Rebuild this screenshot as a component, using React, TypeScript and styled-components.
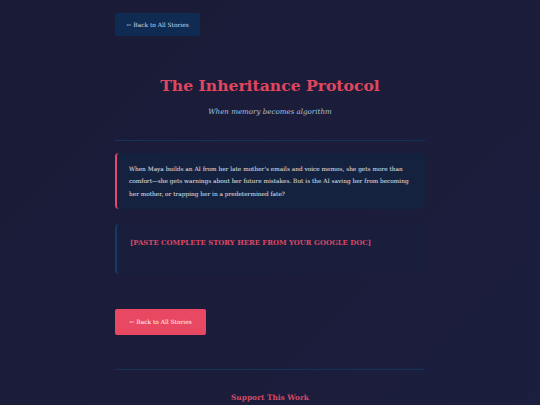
import React from "react";
import styled, { createGlobalStyle } from "styled-components";

const GlobalStyle = createGlobalStyle`
  html, body {
    margin: 0;
    padding: 0;
    background: #1a1c38;
  }
  body {
    font-family: "DejaVu Serif", Georgia, serif;
    color: #e8e8f0;
  }
`;

const Page = styled.div`
  width: 100%;
  min-height: 405px;
  display: flex;
  justify-content: center;
  background: linear-gradient(135deg, #1a1b36 0%, #1b1e3d 100%);
`;

const Wrapper = styled.div`
  width: 310px;
  padding-top: 13px;
  display: flex;
  flex-direction: column;
`;

const BackButton = styled.a<{ $primary?: boolean }>`
  align-self: flex-start;
  display: inline-flex;
  align-items: center;
  padding: ${({ $primary }) => ($primary ? "0 14.5px" : "0 11.5px")};
  height: ${({ $primary }) => ($primary ? "26px" : "23px")};
  border-radius: 2px;
  font-size: 5.9px;
  color: ${({ $primary }) => ($primary ? "#fff4f6" : "#c9d8ec")};
  background: ${({ $primary }) => ($primary ? "#e94862" : "#0f2b52")};
  text-decoration: none;
`;

const Header = styled.header`
  display: flex;
  flex-direction: column;
  align-items: center;
  padding: 40px 0 24px;
  border-bottom: 1px solid #14335a;
`;

const Title = styled.h1`
  margin: 0;
  font-size: 15.6px;
  font-weight: bold;
  color: #e1465e;
`;

const Subtitle = styled.p`
  margin: 12px 0 0;
  font-size: 7.1px;
  font-style: italic;
  color: #a9c2dc;
`;

const Summary = styled.div`
  margin-top: 12px;
  padding: 10px 12px 9px;
  background: #15223f;
  border-left: 2px solid #e2496a;
  border-radius: 4px;
  font-size: 5.8px;
  line-height: 12.3px;
  color: #e2e6ee;
`;

const StoryBox = styled.div`
  margin-top: 15px;
  height: 50px;
  box-sizing: border-box;
  padding: 15px 13px;
  border-left: 2px solid #173a66;
  border-radius: 4px;
  background: #1a1e3d;
`;

const Placeholder = styled.p`
  margin: 0;
  font-size: 6.9px;
  font-weight: bold;
  color: #d94763;
`;

const Footer = styled.div`
  margin-top: 35px;
`;

const Support = styled.section`
  margin-top: 34px;
  padding-top: 23px;
  border-top: 1px solid #14335a;
  display: flex;
  justify-content: center;
`;

const SupportTitle = styled.h3`
  margin: 0;
  font-size: 7.4px;
  font-weight: bold;
  color: #d44a66;
`;

export default function App() {
  return (
    <Page>
      <GlobalStyle />
      <Wrapper>
        <BackButton href="#">← Back to All Stories</BackButton>
        <Header>
          <Title>The Inheritance Protocol</Title>
          <Subtitle>When memory becomes algorithm</Subtitle>
        </Header>
        <Summary>
          When Maya builds an AI from her late mother's emails and voice memos, she gets more than
          comfort—she gets warnings about her future mistakes. But is the AI saving her from becoming
          her mother, or trapping her in a predetermined fate?
        </Summary>
        <StoryBox>
          <Placeholder>[PASTE COMPLETE STORY HERE FROM YOUR GOOGLE DOC]</Placeholder>
        </StoryBox>
        <Footer>
          <BackButton href="#" $primary>
            ← Back to All Stories
          </BackButton>
        </Footer>
        <Support>
          <SupportTitle>Support This Work</SupportTitle>
        </Support>
      </Wrapper>
    </Page>
  );
}
